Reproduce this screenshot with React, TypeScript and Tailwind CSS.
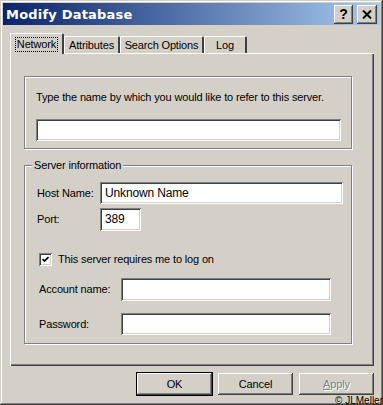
import React from 'react';

const raised =
  'shadow-[inset_-1px_-1px_0_#404040,inset_1px_1px_0_#ffffff,inset_-2px_-2px_0_#808080,inset_2px_2px_0_#d4d0c8]';
const sunken =
  'shadow-[inset_1px_1px_0_#808080,inset_-1px_-1px_0_#ffffff,inset_2px_2px_0_#404040,inset_-2px_-2px_0_#d4d0c8]';
const etched = 'border border-[#808080] shadow-[inset_1px_1px_0_#ffffff,1px_1px_0_#ffffff]';

function Field({ w, h = 22, value }: { w: number; h?: number; value?: string }) {
  return (
    <div className={`bg-white ${sunken} flex items-center pl-[5px] text-[12px] text-black`} style={{ width: w, height: h }}>
      {value}
    </div>
  );
}

function Tab({ label, active, w }: { label: string; active?: boolean; w: number }) {
  if (active) {
    return (
      <div
        className="relative z-10 -mb-px h-[21px] rounded-t-[2px] bg-[#d4d0c8] border-t border-l border-white border-r-2 border-r-[#404040] flex items-center justify-center"
        style={{ width: w }}
      >
        <span className="px-[1px] leading-[13px] outline outline-1 outline-dotted outline-black">{label}</span>
      </div>
    );
  }
  return (
    <div
      className="h-[17px] rounded-t-[2px] bg-[#d4d0c8] border-t border-l border-white border-r-2 border-r-[#404040] flex items-center justify-center"
      style={{ width: w }}
    >
      {label}
    </div>
  );
}

function Button({ children, isDefault }: { children: React.ReactNode; isDefault?: boolean }) {
  return (
    <div
      className={`w-[75px] h-[22px] flex items-center justify-center bg-[#d4d0c8] ${raised} ${
        isDefault ? 'outline outline-1 outline-black' : ''
      }`}
    >
      {children}
    </div>
  );
}

export default function App() {
  return (
    <div
      className="relative w-[383px] h-[405px] overflow-hidden bg-[#d4d0c8] p-[3px] text-[11px] leading-[13px] tracking-[-0.15px] text-black shadow-[inset_-1px_-1px_0_#404040,inset_1px_1px_0_#d4d0c8,inset_-2px_-2px_0_#808080,inset_2px_2px_0_#ffffff]"
      style={{ fontFamily: '"Liberation Sans", Arial, sans-serif' }}
    >
      {/* Title bar */}
      <div className="h-[22px] flex items-center justify-between pl-[3px] pr-[3px] bg-[linear-gradient(to_right,#0a246a,#a6caf0)]">
        <span className="text-white font-bold text-[13px] tracking-[0.2px]" style={{ fontFamily: '"DejaVu Sans", sans-serif' }}>
          Modify Database
        </span>
        <div className="flex gap-[4px]">
          <div className={`w-[19px] h-[19px] bg-[#d4d0c8] ${raised} flex items-center justify-center font-bold text-[14px]`}>?</div>
          <div className={`w-[20px] h-[19px] bg-[#d4d0c8] ${raised} flex items-center justify-center`}>
            <svg width="10" height="9" viewBox="0 0 10 9">
              <path d="M1 0.5 L9 8.5 M9 0.5 L1 8.5" stroke="#000" strokeWidth="2" />
            </svg>
          </div>
        </div>
      </div>

      <div className="pt-[8px] pl-[7px] pr-[6px]">
        {/* Tabs */}
        <div className="flex items-end h-[20px]">
          <Tab label="Network" active w={54} />
          <Tab label="Attributes" w={56} />
          <Tab label="Search Options" w={84} />
          <Tab label="Log" w={43} />
        </div>

        {/* Tab panel */}
        <div className="h-[313px] w-[364px] border-t border-l border-white shadow-[inset_-1px_-1px_0_#404040,inset_-2px_-2px_0_#808080] pt-[22px] pl-[13px]">
          <div className={`w-[328px] h-[73px] ${etched} pl-[11px] pt-[14px]`}>
            <div>Type the name by which you would like to refer to this server.</div>
            <div className="mt-[15px]">
              <Field w={305} />
            </div>
          </div>

          <div className={`relative mt-[16px] w-[328px] h-[179px] ${etched} pt-[16px]`}>
            <span className="absolute -top-[7px] left-[7px] bg-[#d4d0c8] px-[2px]">Server information</span>
            <div className="flex items-center pl-[12px]">
              <span className="w-[63px]">Host Name:</span>
              <Field w={243} value="Unknown Name" />
            </div>
            <div className="flex items-center pl-[12px] mt-[4px]">
              <span className="w-[63px]">Port:</span>
              <Field w={41} h={23} value="389" />
            </div>
            <div className="flex items-center pl-[14px] mt-[22px]">
              <div className={`w-[13px] h-[13px] bg-white ${sunken} flex items-center justify-center`}>
                <svg width="7" height="7" viewBox="0 0 7 7">
                  <path d="M0.5 3 L2.5 5 L6.5 1" stroke="#000" strokeWidth="1.6" fill="none" />
                </svg>
              </div>
              <span className="ml-[6px]">This server requires me to log on</span>
            </div>
            <div className="flex items-center pl-[14px] mt-[12px]">
              <span className="w-[82px]">Account name:</span>
              <Field w={210} h={23} />
            </div>
            <div className="flex items-center pl-[14px] mt-[12px]">
              <span className="w-[82px]">Password:</span>
              <Field w={210} />
            </div>
          </div>
        </div>

        {/* Dialog buttons */}
        <div className="flex justify-end gap-[6px] mt-[7px]">
          <Button isDefault>OK</Button>
          <Button>Cancel</Button>
          <Button>
            <span className="text-[#808080] [text-shadow:1px_1px_0_#ffffff]">
              <span className="underline">A</span>pply
            </span>
          </Button>
        </div>
      </div>

      <span className="absolute bottom-[-1px] right-0 text-[10px] leading-[11px] tracking-normal">© JLMeller</span>
    </div>
  );
}
